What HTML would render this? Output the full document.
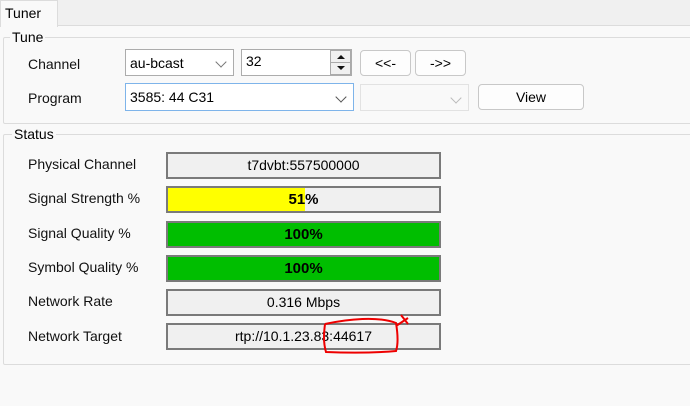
<!DOCTYPE html>
<html><head><style>
*{box-sizing:border-box;margin:0;padding:0}
body{width:690px;height:406px;background:#f9f9f9;font-family:"Liberation Sans",sans-serif;font-size:14px;color:#000;position:relative;overflow:hidden}
.a{position:absolute}
.strip{left:0;top:0;width:690px;height:26px;background:#f0f0f0;border-bottom:1px solid #dcdcdc}
.tab{left:0;top:0;width:58px;height:27px;background:#f9f9f9;border:1px solid #dcdcdc;border-bottom:none;padding:4px 0 0 4px;font-size:14px}
.grp{border:1px solid #dcdcdc;border-radius:2px}
.leg{background:#f9f9f9;padding:0 2px;font-size:14px}
.combo{background:#fff;border:1px solid #acacac;padding:5px 0 0 4px;font-size:14px}
.chev{position:absolute;right:8px;top:9px;width:8px;height:8px;border-right:1px solid #555;border-bottom:1px solid #555;transform:rotate(45deg)}
.btn{background:#fdfdfd;border:1px solid #c8c8c8;border-radius:4px;text-align:center;font-size:14px;padding-top:4px}
.lbl{left:28px;font-size:14px;color:#111}
.box{left:166px;width:275px;height:27px;border:2px solid #7a7a7a;background:#f0f0f0;text-align:center;padding-top:3px;font-size:14px;overflow:hidden}
.box b{position:relative;font-size:15px}
</style></head><body>
<div class="a strip"></div>
<div class="a tab">Tuner</div>

<div class="a grp" style="left:3px;top:37px;width:700px;height:87px"></div>
<div class="a leg" style="left:10px;top:29px">Tune</div>
<div class="a lbl" style="top:56px">Channel</div>
<div class="a lbl" style="top:90px">Program</div>
<div class="a combo" style="left:125px;top:49px;width:109px;height:27px">au-bcast<span class="chev" style="top:8px;border-color:#777"></span></div>
<div class="a combo" style="left:241px;top:49px;width:111px;height:27px;padding-top:3px">32</div>
<div class="a" style="left:330px;top:50px;width:21px;height:25px;background:#f0f0f0;border:1px solid #aaa">
 <div style="position:absolute;left:6px;top:4px;border:4px solid transparent;border-bottom:4px solid #111;border-top:none"></div>
 <div style="position:absolute;left:0;top:11px;width:19px;border-top:1px solid #aaa"></div>
 <div style="position:absolute;left:6px;top:15px;border:4px solid transparent;border-top:4px solid #111;border-bottom:none"></div>
</div>
<div class="a btn" style="left:360px;top:50px;width:51px;height:26px">&lt;&lt;-</div>
<div class="a btn" style="left:415px;top:50px;width:51px;height:26px">-&gt;&gt;</div>
<div class="a combo" style="left:125px;top:83px;width:229px;height:28px;border-color:#7eb4ea">3585: 44 C31<span class="chev"></span></div>
<div class="a combo" style="left:360px;top:84px;width:109px;height:27px;background:#f9f9f9;border-color:#e2e2e2"><span class="chev" style="border-color:#bbb"></span></div>
<div class="a btn" style="left:478px;top:84px;width:106px;height:26px">View</div>

<div class="a grp" style="left:3px;top:134px;width:700px;height:231px"></div>
<div class="a leg" style="left:12px;top:126px">Status</div>

<div class="a lbl" style="top:156px">Physical Channel</div>
<div class="a box" style="top:152px">t7dvbt:557500000</div>
<div class="a lbl" style="top:190px">Signal Strength %</div>
<div class="a box" style="top:186px"><div style="position:absolute;left:0;top:0;width:137px;height:23px;background:#ffff00"></div><b>51%</b></div>
<div class="a lbl" style="top:225px">Signal Quality %</div>
<div class="a box" style="top:221px;background:#00be00"><b>100%</b></div>
<div class="a lbl" style="top:259px">Symbol Quality %</div>
<div class="a box" style="top:255px;background:#00be00"><b>100%</b></div>
<div class="a lbl" style="top:293px">Network Rate</div>
<div class="a box" style="top:289px">0.316 Mbps</div>
<div class="a lbl" style="top:328px">Network Target</div>
<div class="a box" style="top:323px">rtp://10.1.23.83:44617</div>
<svg class="a" style="left:318px;top:310px" width="100" height="50" viewBox="0 0 100 50">
<path d="M7 14 C30 9 60 6 78 13 C80 25 80 35 78 41 C55 43 30 43 8 42 C5 32 6 22 7 14" fill="none" stroke="#e00" stroke-width="2"/>
<path d="M78 16 L90 8 M83 5 L90 14" fill="none" stroke="#e00" stroke-width="2"/>
</svg>
</body></html>
